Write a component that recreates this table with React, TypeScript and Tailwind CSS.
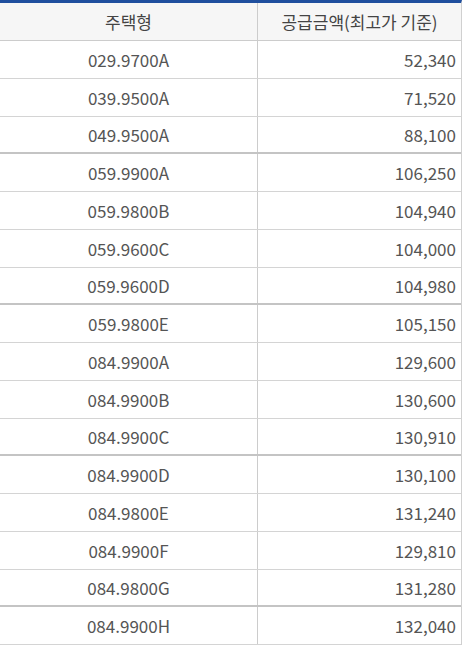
import React from 'react';

type Row = { type: string; price: string; groupEnd?: boolean };

const rows: Row[] = [
  { type: '029.9700A', price: '52,340' },
  { type: '039.9500A', price: '71,520' },
  { type: '049.9500A', price: '88,100', groupEnd: true },
  { type: '059.9900A', price: '106,250' },
  { type: '059.9800B', price: '104,940' },
  { type: '059.9600C', price: '104,000' },
  { type: '059.9600D', price: '104,980', groupEnd: true },
  { type: '059.9800E', price: '105,150' },
  { type: '084.9900A', price: '129,600' },
  { type: '084.9900B', price: '130,600' },
  { type: '084.9900C', price: '130,910', groupEnd: true },
  { type: '084.9900D', price: '130,100' },
  { type: '084.9800E', price: '131,240' },
  { type: '084.9900F', price: '129,810' },
  { type: '084.9800G', price: '131,280', groupEnd: true },
  { type: '084.9900H', price: '132,040' },
];

const App: React.FC = () => {
  return (
    <div className="w-[463px] h-[646px] bg-white overflow-hidden font-['Noto_Sans_CJK_KR','Noto_Sans',sans-serif] text-[17px] text-[#555]">
      <div className="w-[462px] border-t-[3px] border-[#1f4f9e] border-r border-r-[#d0d0d0]">
        {/* header */}
        <div className="flex h-[38px] bg-[#f6f6f6] border-b border-[#cccccc] text-[#444]">
          <div className="w-[258px] flex items-center justify-center border-r border-[#cccccc]">주택형</div>
          <div className="flex-1 flex items-center justify-center">공급금액(최고가 기준)</div>
        </div>

        {rows.map((r) => (
          <div
            key={r.type}
            className={`flex ${r.groupEnd ? 'h-[37px] border-b-2 border-[#c4c4c4]' : 'h-[38px] border-b border-[#d4d4d4]'}`}
          >
            <div className="w-[258px] flex items-center justify-center border-r border-[#cccccc]">{r.type}</div>
            <div className="flex-1 flex items-center justify-end pr-[5px]">{r.price}</div>
          </div>
        ))}
      </div>
    </div>
  );
};

export default App;
